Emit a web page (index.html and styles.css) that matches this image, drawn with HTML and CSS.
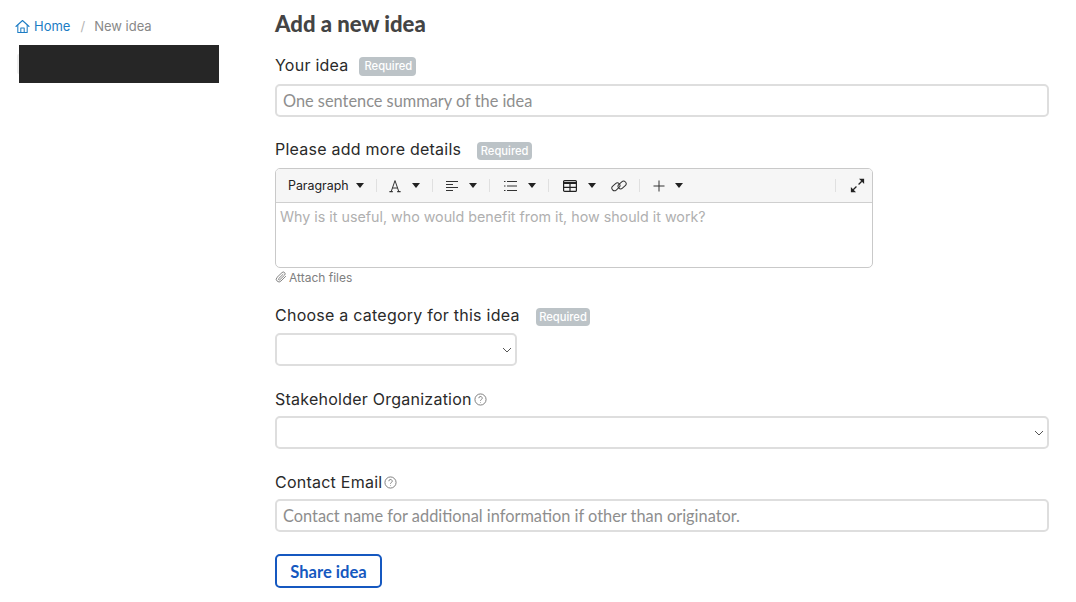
FILE: index.html
```html
<!DOCTYPE html>
<html lang="en">
<head>
<meta charset="utf-8">
<title>Add a new idea</title>
<link rel="stylesheet" href="styles.css">
</head>
<body>
<div class="app">
  <aside class="sidebar">
    <nav class="crumbs">
      <a class="crumb-home" href="#">
        <svg class="home-icon" viewBox="0 0 16 16" fill="none" stroke="currentColor" stroke-width="1.1" stroke-linejoin="round" stroke-linecap="round"><path d="M1 8 8 1.6 15 8"/><path d="M3 6.6V14.4H13V6.6"/><path d="M6.2 14.4V9.6H9.8V14.4"/></svg>
        Home</a>
      <span class="crumb-sep">/</span>
      <span class="crumb-current">New idea</span>
    </nav>
    <div class="redacted"></div>
  </aside>
  <main class="main">
    <h1 class="title">Add a new idea</h1>
    <form class="form">
      <div class="field field-idea">
        <div class="label-row label-row-first"><label class="label">Your idea</label><span class="badge badge-first">Required</span></div>
        <input class="input" type="text" placeholder="One sentence summary of the idea">
      </div>
      <div class="field field-details">
        <div class="label-row label-row-wide"><label class="label">Please add more details</label><span class="badge">Required</span></div>
        <div class="editor">
          <div class="toolbar">
            <span class="tool tool-para">Paragraph<i class="caret"></i></span>
            <span class="divider"></span>
            <span class="tool tool-font">
              <svg class="ico ico-font" viewBox="0 0 12 14" fill="none" stroke="#333" stroke-width="1"><path d="M2.2 12.6 6 1.6l3.8 11M3.4 9h5.2"/><path d="M.4 12.6h3.4M8.2 12.6h3.4" stroke-width="1.1"/></svg><i class="caret caret-gap"></i></span>
            <span class="divider"></span>
            <span class="tool tool-align">
              <svg class="ico ico-align" viewBox="0 0 12 14" fill="none" stroke="#333" stroke-width="1"><path d="M0 2.5h12M0 5.5h7M0 8.5h12M0 11.5h7"/></svg><i class="caret caret-gap"></i></span>
            <span class="divider"></span>
            <span class="tool tool-list">
              <svg class="ico" viewBox="0 0 14 14" fill="none" stroke="#333" stroke-width="1"><path d="M4 2.5h10M4 7h10M4 11.5h10M1 2.5h1.5M1 7h1.5M1 11.5h1.5"/></svg><i class="caret caret-gap"></i></span>
            <span class="divider"></span>
            <span class="tool tool-table">
              <svg class="ico ico-table" viewBox="0 0 14 12" fill="none" stroke="#222" stroke-width="1.2"><rect x=".6" y=".6" width="12.8" height="10.8" rx="1"/><path d="M.6 3h12.8" stroke-width="2"/><path d="M.6 7.4h12.8M7 3v8.4"/></svg><i class="caret caret-gap"></i></span>
            <span class="tool tool-link">
              <svg class="ico ico-link" viewBox="0 0 16 14" fill="none" stroke="#333" stroke-width="1"><rect x="0.4" y="5.2" width="9" height="5.2" rx="2.6" transform="rotate(-42 4.9 7.8)"/><rect x="6.6" y="3.4" width="9" height="5.2" rx="2.6" transform="rotate(-42 11.1 6)"/></svg></span>
            <span class="divider"></span>
            <span class="tool tool-plus">
              <svg class="ico ico-plus" viewBox="0 0 12 12" fill="none" stroke="#333" stroke-width="1"><path d="M6 .5v11M.5 6h11"/></svg><i class="caret caret-plus"></i></span>
            <span class="spacer"></span>
            <span class="divider"></span>
            <span class="tool tool-full">
              <svg class="ico ico-full" viewBox="0 0 14 14" fill="#222" stroke="#222" stroke-width="1.2"><path d="M8 6 11 3" fill="none"/><path d="M8.4 .8h4.8v4.8z" stroke="none"/><path d="M6 8 3 11" fill="none"/><path d="M.8 8.4v4.8h4.8z" stroke="none"/></svg></span>
          </div>
          <div class="editor-body">Why is it useful, who would benefit from it, how should it work?</div>
        </div>
        <div class="attach">
          <svg class="clip" viewBox="0 0 12 12" fill="none" stroke="#777" stroke-width=".9" stroke-linecap="round"><path d="M10.6 5.4 6 10a2.6 2.6 0 0 1-4-3.6L7 1.6a1.8 1.8 0 0 1 2.6 2.5L4.9 8.7a.8.8 0 0 1-1.2-1.1L8 3.4"/></svg>Attach files</div>
      </div>
      <div class="field field-category">
        <div class="label-row label-row-wide"><label class="label">Choose a category for this idea</label><span class="badge">Required</span></div>
        <div class="select select-short"><svg class="chev" viewBox="0 0 10 6" fill="none" stroke="#555" stroke-width="1"><path d="M1 1 5 5 9 1"/></svg></div>
      </div>
      <div class="field field-org">
        <div class="label-row label-row-help"><label class="label">Stakeholder Organization</label><svg class="help" viewBox="0 0 14 14" fill="none" stroke="#777" stroke-width="1"><circle cx="7" cy="7" r="6"/><path d="M5.2 5.6a1.8 1.8 0 1 1 2.7 1.5c-.6.4-.9.7-.9 1.3"/><path d="M7 10v.6"/></svg></div>
        <div class="select"><svg class="chev" viewBox="0 0 10 6" fill="none" stroke="#555" stroke-width="1"><path d="M1 1 5 5 9 1"/></svg></div>
      </div>
      <div class="field field-email">
        <div class="label-row label-row-help"><label class="label">Contact Email</label><svg class="help" viewBox="0 0 14 14" fill="none" stroke="#777" stroke-width="1"><circle cx="7" cy="7" r="6"/><path d="M5.2 5.6a1.8 1.8 0 1 1 2.7 1.5c-.6.4-.9.7-.9 1.3"/><path d="M7 10v.6"/></svg></div>
        <input class="input" type="text" placeholder="Contact name for additional information if other than originator.">
      </div>
      <button class="share" type="button">Share idea</button>
    </form>
  </main>
</div>
</body>
</html>
```

FILE: styles.css
```css
* { box-sizing: border-box; }
html, body { margin: 0; height: 100%; overflow: hidden; background: #fff; }
body { font-family: "Inter", "Liberation Sans", sans-serif; color: #222; }
.app { display: flex; align-items: flex-start; }
.sidebar { width: 275px; flex: none; padding: 17px 0 0 15px; }
.crumbs { display: flex; align-items: center; height: 18px; font-size: 13px; }
.crumb-home { display: flex; align-items: center; gap: 4px; color: #1c7cc4; text-decoration: none; }
.home-icon { width: 15px; height: 15px; }
.crumb-sep { margin: 0 9px 0 10px; color: #b4b4b4; font-size: 13px; }
.crumb-current { color: #888; }
.redacted { position: relative; width: 200px; height: 38px; margin: 10px 0 0 4px; background: #262626; }
.redacted::before { content: ""; position: absolute; left: -2px; top: 9px; width: 2px; height: 20px; border-radius: 2px 0 0 2px; background: #eee; }

.main { width: 774px; flex: none; padding-top: 11px; }
.title { margin: 0; font-family: "Lato", sans-serif; font-weight: 900; font-size: 22.1px; line-height: 26px; color: #444; }
.form { display: flex; flex-direction: column; }
.field-idea { margin-top: 18px; }
.field-details { margin-top: 22px; }
.field-category { margin-top: 19px; }
.field-category .label-row { margin-bottom: 8px; }
.field-org { margin-top: 23px; }
.field-email { margin-top: 23px; }
.label-row { display: flex; align-items: center; gap: 11px; height: 20px; margin-bottom: 9px; }
.label-row-first { gap: 10px; }
.label-row-wide { gap: 16px; }
.label-row-help { gap: 2px; margin-bottom: 8px; height: 19px; }
.label { font-size: 16px; letter-spacing: .24px; color: #2a2a2a; }
.badge { display: inline-block; padding: 0 3.5px; height: 18px; line-height: 18px; border-radius: 4px; background: #bcc3c7; color: #fff; font-size: 11.2px; font-weight: 500; margin-top: 3px; }
.badge-first { padding: 0 4px 0 6px; height: 19px; line-height: 19px; margin-top: 2px; }
.input { display: block; width: 100%; height: 33px; padding: 0 6px; border: 2px solid #dedede; border-radius: 5px; background: #fff; font-family: "Lato", sans-serif; font-size: 16.35px; color: #222; outline: none; }
.input::placeholder { color: #8e8e8e; opacity: 1; }
.editor { width: 598px; height: 100px; border: 1px solid #c9c9c9; border-radius: 5px; overflow: hidden; }
.toolbar { display: flex; align-items: center; height: 34px; padding-left: 12px; padding-right: 7px; background: #f6f6f6; border-bottom: 1px solid #cfcfcf; }
.tool { display: flex; align-items: center; font-size: 12.4px; color: #222; }
.divider { width: 1px; height: 13px; background: #e0e0e0; margin: 0 12px; }
.spacer { flex: 1; }
.caret { display: inline-block; width: 0; height: 0; margin-left: 7px; border-style: solid; border-width: 5px 4.5px 0; border-color: #222 transparent transparent; }
.caret-gap { margin-left: 11px; }
.caret-plus { margin-left: 10px; }
.ico { display: block; width: 14px; height: 14px; }
.ico-font, .ico-align { width: 12px; }
.tool-align { margin-left: 1px; }
.tool-list { margin-left: 1px; }
.tool-table { margin-left: 2px; }
.ico-table { height: 12px; }
.ico-link { width: 16px; height: 14px; margin-left: 15px; }
.tool-plus { margin-left: 1px; }
.ico-plus { width: 12px; height: 12px; }
.tool-full { margin-left: 2px; }
.ico-full { width: 15px; height: 15px; }
.editor-body { padding: 5px 4px; font-size: 14.27px; line-height: 18px; color: #b0b0b0; }
.attach { display: flex; align-items: center; gap: 2px; height: 18px; font-size: 12px; color: #808080; }
.clip { width: 12px; height: 12px; }
.select { display: flex; align-items: center; justify-content: flex-end; height: 33px; padding-right: 3px; border: 2px solid #dedede; border-radius: 5px; background: #fff; }
.select-short { width: 242px; }
.chev { width: 10px; height: 6px; }
.help { width: 13px; height: 13px; margin-top: 2px; }
.share { width: 107px; height: 34px; margin-top: 22px; padding: 1px 0 0; border: 2px solid #1558c0; border-radius: 5px; background: #fff; color: #1558c0; font-family: "Lato", sans-serif; font-weight: 700; font-size: 16.6px; }
```
